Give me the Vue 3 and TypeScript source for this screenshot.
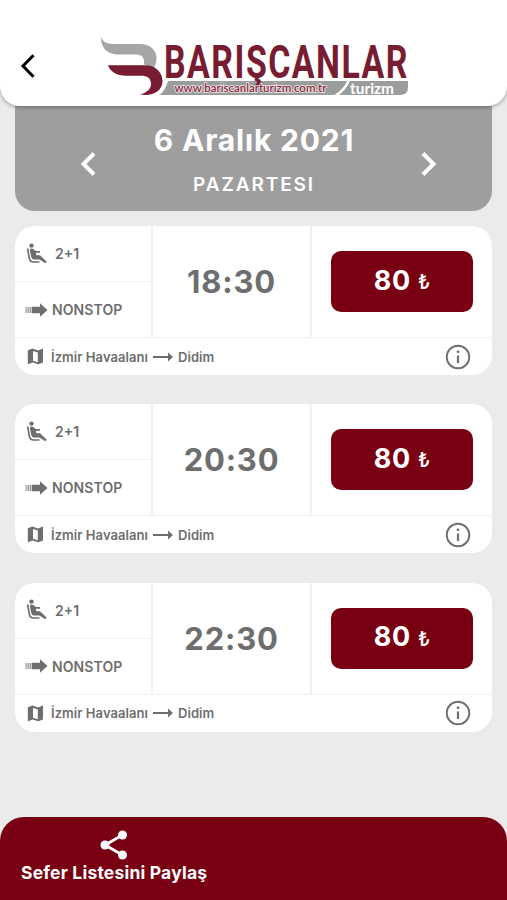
<script setup lang="ts">
interface Trip {
  time: string
  price: number
  seats: string
  kind: string
  from: string
  to: string
}

const trips: Trip[] = ['18:30', '20:30', '22:30'].map((time) => ({
  time,
  price: 80,
  seats: '2+1',
  kind: 'NONSTOP',
  from: 'İzmir Havaalanı',
  to: 'Didim',
}))
</script>

<template>
  <div class="screen">
    <header class="topbar">
      <button class="back" aria-label="Geri">
        <svg width="16" height="26" viewBox="0 0 16 26"><path d="M13.500 2.200 3 13l10.500 10.800" fill="none" stroke="#000" stroke-width="3" /></svg>
      </button>
      <svg class="logo" width="312" height="64" viewBox="100 35 312 64">
        <path fill="#a5a7a6" d="M101 37C103 42 107 44 114 44H140C151 44 156.500 51 156.500 58C156.500 63 155 67 152.500 70C150 67 148 65.500 144 64.500C145 58 142 54.500 136 54.500H118C107 54.500 101 48 101 37Z" />
        <path fill="#781c32" d="M108 65.300H145C156 65.300 162.500 73 162.500 81C162.500 91 153 96.500 140 94.500C147 92.500 151 89 151 84C151 78 147 75.800 141 75.800H126C117 75.800 110.500 72 108 65.300Z" />
        <path fill="#9b9d9c" d="M168 81H408V87Q408 95 400 95H159.500Q165 91 168 81Z" />
        <path d="M349 80Q345 90 335 96" fill="none" stroke="#fff" stroke-width="2.500" />
        <text class="brand" x="164" y="78" textLength="245" lengthAdjust="spacingAndGlyphs">BARIŞCANLAR</text>
        <text class="site" x="174.500" y="92" textLength="152" lengthAdjust="spacingAndGlyphs">www.bariscanlarturizm.com.tr</text>
        <text class="sub" x="350" y="93.500" textLength="44" lengthAdjust="spacingAndGlyphs">turizm</text>
      </svg>
    </header>

    <section class="day">
      <button aria-label="Önceki gün">
        <svg width="18" height="26" viewBox="0 0 18 26"><path d="M15 2.500 4.500 13 15 23.500" fill="none" stroke="#fff" stroke-width="4" /></svg>
      </button>
      <div class="date">
        <h1>6 Aralık 2021</h1>
        <p>PAZARTESI</p>
      </div>
      <button aria-label="Sonraki gün">
        <svg width="18" height="26" viewBox="0 0 18 26"><path d="M3 2.500 13.500 13 3 23.500" fill="none" stroke="#fff" stroke-width="4" /></svg>
      </button>
    </section>

    <main class="list">
      <article v-for="trip in trips" :key="trip.time" class="card">
        <div class="main">
          <div class="features">
            <div class="feature seats">
              <svg width="22" height="22" viewBox="0 0 22 22" fill="none" stroke="#6e6e6e">
                <circle cx="5.500" cy="2.600" r="2.200" fill="#6e6e6e" stroke="none" />
                <path d="M1.600 5.500 3.300 15.200Q4 19 7.500 19H13.500" stroke-width="1.700" />
                <path d="M3.800 7Q4.500 5 6.800 5.700L10 8H14V9.800H9.800L10.300 12.200H14L20.800 18.700 19.200 20.200 13.500 16.600H8Q5.800 16.600 5.300 14.300Z" fill="#6e6e6e" stroke="none" />
              </svg>
              <span>{{ trip.seats }}</span>
            </div>
            <div class="feature kind">
              <svg width="23" height="14" viewBox="0 0 23 14" fill="#6e6e6e">
                <path opacity=".7" d="M.5 4h1.200v6H.5zM2.500 4h1.400v6H2.500zM4.600 4h1.600v6H4.600z" />
                <path d="M6.800 3.800H15V.3L22.500 7 15 13.700V10.200H6.800z" />
              </svg>
              <span>{{ trip.kind }}</span>
            </div>
          </div>
          <div class="time">{{ trip.time }}</div>
          <div class="buy">
            <button class="price"><span>{{ trip.price }}</span><span class="lira">₺</span></button>
          </div>
        </div>
        <div class="route">
          <svg class="map" width="17" height="17" viewBox="0 0 17 17">
            <path fill="#6e6e6e" fill-rule="evenodd" d="M.8 2.200 5.500.5 11 2.400 16 .6V14.500L11.300 16.300 5.700 14.400.8 16.200ZM6 2.900V12.700L10.800 14.300V4.500Z" />
          </svg>
          <span class="from">{{ trip.from }}</span>
          <svg class="arrow" width="20" height="10" viewBox="0 0 20 10">
            <path d="M0 5H16" stroke="#6e6e6e" stroke-width="2" />
            <path d="M15 .6 20 5 15 9.400Z" fill="#6e6e6e" />
          </svg>
          <span>{{ trip.to }}</span>
          <svg class="info" width="26" height="26" viewBox="0 0 26 26">
            <circle cx="13" cy="13" r="11.300" fill="none" stroke="#6e6e6e" stroke-width="1.900" />
            <path d="M13 11.500V19" stroke="#6e6e6e" stroke-width="2.200" />
            <circle cx="13" cy="7.800" r="1.400" fill="#6e6e6e" />
          </svg>
        </div>
      </article>
    </main>

    <footer class="bottom">
      <button class="share">
        <svg width="28" height="30" viewBox="0 0 28 30" fill="#fff">
          <path d="M22.500 5 5 15 22.500 25" fill="none" stroke="#fff" stroke-width="2.800" />
          <circle cx="22.500" cy="5" r="4.500" />
          <circle cx="5" cy="15" r="4.500" />
          <circle cx="22.500" cy="25" r="4.500" />
        </svg>
        <span>Sefer Listesini Paylaş</span>
      </button>
    </footer>
  </div>
</template>

<style>
body {
  margin: 0;
  background: #ebebeb;
}
</style>

<style scoped>
.screen {
  box-sizing: border-box;
  display: flex;
  flex-direction: column;
  height: 900px;
  overflow: hidden;
  background: #ebebeb;
  font-family: Inter, 'Liberation Sans', sans-serif;
  color: #6e6e6e;
}
button {
  padding: 0;
  border: 0;
  background: none;
  font: inherit;
  color: inherit;
}
svg {
  display: block;
  flex: none;
}
.topbar {
  position: relative;
  z-index: 1;
  box-sizing: border-box;
  flex: none;
  display: flex;
  align-items: flex-start;
  height: 106px;
  padding: 35px 0 0 20px;
  background: #fff;
  border-radius: 0 0 20px 20px;
  box-shadow: 0 1px 4px rgba(0, 0, 0, 0.35);
}
.back {
  margin-top: 18px;
}
.logo {
  margin-left: 64px;
  overflow: visible;
}
.brand {
  font: 700 46px Roboto, sans-serif;
  letter-spacing: 2px;
  fill: #781c32;
}
.site {
  font: 600 11px Lato, sans-serif;
  fill: #86273c;
  stroke: #f3eeee;
  stroke-width: 1.5;
  paint-order: stroke;
}
.sub {
  font: 700 16px Lato, sans-serif;
  fill: #fff;
}
.day {
  box-sizing: border-box;
  flex: none;
  display: flex;
  align-items: center;
  justify-content: space-between;
  height: 105px;
  margin: 0 15px;
  padding: 10px 54px 0 64px;
  border-radius: 0 0 20px 20px;
  background: #9e9e9e;
  color: #fff;
}
.date {
  margin: -7px 9px 0 0;
  text-align: center;
}
.date h1 {
  margin: 0;
  font-size: 30px;
  line-height: 40px;
  font-weight: 700;
  letter-spacing: 0.8px;
}
.date p {
  margin: 10px 0 0;
  font-size: 19px;
  line-height: 30px;
  font-weight: 600;
  letter-spacing: 1.9px;
}
.list {
  flex: 1;
  display: flex;
  flex-direction: column;
  gap: 29.400px;
  padding: 15px 15px 0;
}
.card {
  flex: none;
  height: 149px;
  border-radius: 20px;
  background: #fff;
  overflow: hidden;
}
.main {
  box-sizing: border-box;
  display: grid;
  grid-template-columns: 138px 159px 1fr;
  height: 112px;
  border-bottom: 1px solid #f1f1f1;
}
.features {
  display: grid;
  grid-template-rows: 56px 55px;
  border-right: 2px solid #f0f0f0;
}
.feature {
  box-sizing: border-box;
  display: flex;
  align-items: center;
  font-weight: 600;
}
.seats {
  gap: 7px;
  padding-left: 11px;
  border-bottom: 1px solid #f1f1f1;
  font-size: 14px;
}
.kind {
  gap: 4px;
  padding-left: 10px;
  font-size: 14px;
  letter-spacing: 0.1px;
}
.time {
  display: flex;
  align-items: center;
  justify-content: center;
  border-right: 2px solid #f0f0f0;
  font-size: 31px;
  font-weight: 700;
  letter-spacing: 0.8px;
}
.buy {
  padding: 25px 0 0 19px;
}
.price {
  display: flex;
  align-items: center;
  justify-content: center;
  gap: 7px;
  width: 142px;
  height: 61px;
  border-radius: 10px;
  background: #780012;
  color: #fff;
  font-size: 27px;
  line-height: 32px;
  font-weight: 700;
  letter-spacing: 0.8px;
}
.price span {
  margin-top: -2px;
}
.price .lira {
  margin-top: 1px;
  font-size: 20px;
  font-weight: 500;
  letter-spacing: 0;
}
.route {
  display: flex;
  align-items: center;
  height: 37px;
  padding: 0 21px 0 12px;
  font-size: 13px;
  font-weight: 600;
  letter-spacing: 0.06px;
}
.from {
  margin-left: 7px;
}
.arrow {
  margin: 0 5px;
}
.info {
  margin-left: auto;
}
.bottom {
  box-sizing: border-box;
  flex: none;
  height: 83px;
  padding: 13px 21px 0;
  border-radius: 24px 24px 0 0;
  background: #780012;
  color: #fff;
}
.share {
  display: flex;
  flex-direction: column;
  align-items: center;
  font-size: 17.500px;
  line-height: 25px;
  font-weight: 700;
  letter-spacing: 0.2px;
}
</style>
